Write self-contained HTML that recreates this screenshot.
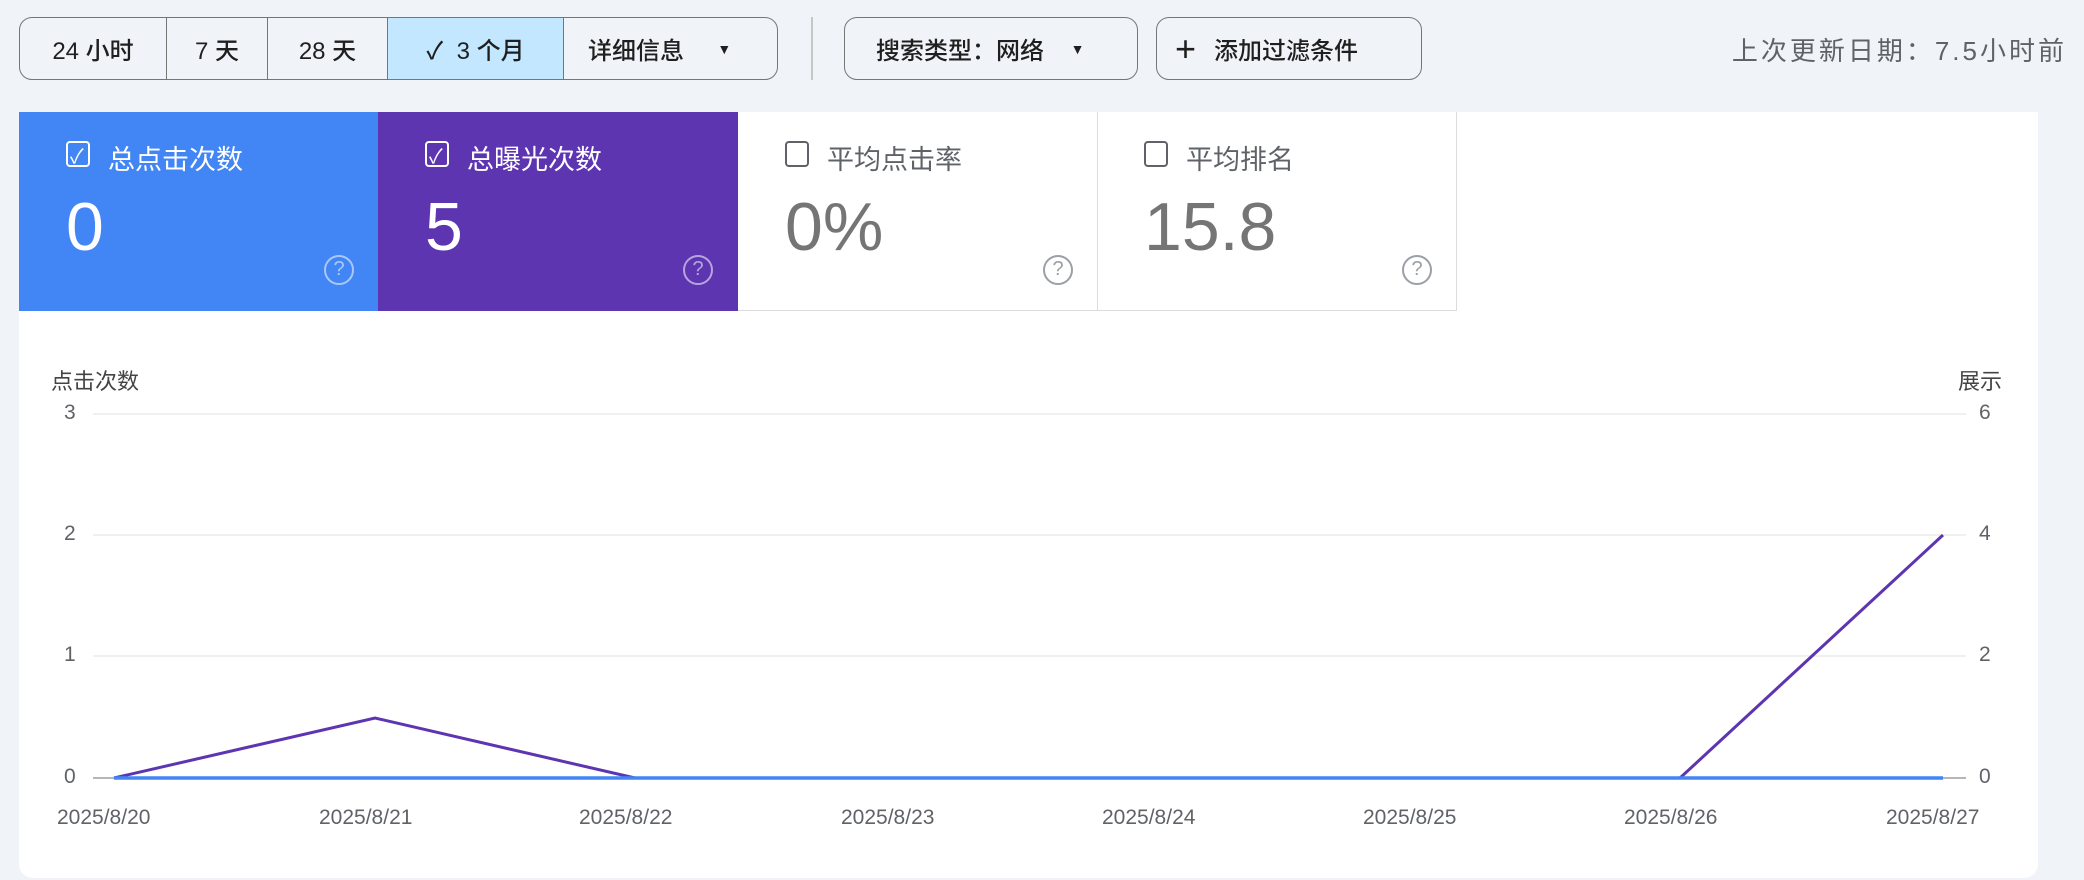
<!DOCTYPE html>
<html><head><meta charset="utf-8"><style>
*{margin:0;padding:0;box-sizing:border-box}
body{width:2084px;height:880px;background:#f0f4f9;font-family:"Liberation Sans","Noto Sans CJK SC",sans-serif;position:relative;overflow:hidden;color:#1f1f1f}
.abs{position:absolute}
.grp{left:19px;top:17px;width:759px;height:63px;border:1.5px solid #747775;border-radius:13px;overflow:hidden;display:flex}
.seg{height:100%;display:flex;align-items:center;justify-content:center;font-size:24px;border-right:1.5px solid #747775;color:#1f1f1f;font-weight:500}
.btn{top:17px;height:63px;border:1.5px solid #747775;border-radius:13px;display:flex;align-items:center;font-size:24px;font-weight:500}
.tile{top:112px;height:199px;width:360px}
.cb{position:absolute;left:47px;top:29px;width:24px;height:26px;border:2.5px solid #fff;border-radius:4px}
.lbl{position:absolute;left:89px;top:26px;font-size:27px}
.num{position:absolute;left:47px;top:76px;font-size:68px}
.q{position:absolute;left:305px;top:143px;width:30px;height:30px;border:2.5px solid rgba(255,255,255,.55);border-radius:50%;font-size:20px;text-align:center;line-height:25px;color:rgba(255,255,255,.55)}
.ax{font-size:21px;color:#5f6368}
</style></head><body>
<div class="abs grp">
 <div class="seg" style="width:147px">24 小时</div>
 <div class="seg" style="width:101px">7 天</div>
 <div class="seg" style="width:120px">28 天</div>
 <div class="seg" style="width:176px;background:#c2e7ff">✓&nbsp;&nbsp;3 个月</div>
 <div class="seg" style="flex:1;border-right:none;justify-content:flex-start;padding-left:24px">详细信息&nbsp;&nbsp;&nbsp;&nbsp;&nbsp;<span style="font-size:14px">▼</span></div>
</div>
<div class="abs" style="left:811px;top:17px;width:1.5px;height:63px;background:#c4c7c5"></div>
<div class="abs btn" style="left:844px;width:294px;padding-left:31px">搜索类型：网络&nbsp;&nbsp;&nbsp;&nbsp;<span style="font-size:14px">▼</span></div>
<div class="abs btn" style="left:1156px;width:266px;padding-left:18px"><span style="font-size:36px;font-weight:300;margin-right:18px">+</span>添加过滤条件</div>
<div class="abs" style="right:17px;top:31px;font-size:26px;letter-spacing:3px;color:#5f6368">上次更新日期：7.5小时前</div>

<div class="abs" style="left:19px;top:112px;width:2019px;height:766px;background:#fff;border-radius:0 0 14px 14px"></div>

<div class="abs tile" style="left:19px;background:#4285f4;color:#fff">
 <div class="cb"><span style="position:absolute;left:2px;top:-3px;font-size:20px">✓</span></div>
 <div class="lbl">总点击次数</div><div class="num">0</div><div class="q">?</div></div>
<div class="abs tile" style="left:378px;background:#5e35b1;color:#fff">
 <div class="cb"><span style="position:absolute;left:2px;top:-3px;font-size:20px">✓</span></div>
 <div class="lbl">总曝光次数</div><div class="num">5</div><div class="q">?</div></div>
<div class="abs tile" style="left:738px;border-right:1.5px solid #dadce0;border-bottom:1.5px solid #dadce0;color:#5f6368">
 <div class="cb" style="border-color:#5f6368"></div>
 <div class="lbl">平均点击率</div><div class="num" style="color:#757575">0%</div><div class="q" style="border-color:#9aa0a6;color:#9aa0a6">?</div></div>
<div class="abs tile" style="left:1097px;width:360px;border-right:1.5px solid #dadce0;border-bottom:1.5px solid #dadce0;color:#5f6368">
 <div class="cb" style="border-color:#5f6368"></div>
 <div class="lbl">平均排名</div><div class="num" style="color:#757575">15.8</div><div class="q" style="border-color:#9aa0a6;color:#9aa0a6">?</div></div>

<svg class="abs" style="left:0;top:0" width="2084" height="880">
 <g stroke="#ebebeb" stroke-width="1.5">
  <line x1="93" y1="414" x2="1966" y2="414"/><line x1="93" y1="535" x2="1966" y2="535"/><line x1="93" y1="656" x2="1966" y2="656"/>
 </g>
 <line x1="93" y1="778" x2="1966" y2="778" stroke="#9e9e9e" stroke-width="1.5"/>
 <polyline points="114,778 375,718 635,778 1680,778 1943,535" fill="none" stroke="#5e35b1" stroke-width="3"/>
 <line x1="114" y1="778" x2="1943" y2="778" stroke="#4285f4" stroke-width="3.5"/>
</svg>
<div class="abs ax" style="left:51px;top:364px;color:#444;font-size:22px">点击次数</div>
<div class="abs ax" style="left:1958px;top:364px;color:#444;font-size:22px">展示</div>
<div class="abs ax" style="left:64px;top:401px">3</div>
<div class="abs ax" style="left:64px;top:522px">2</div>
<div class="abs ax" style="left:64px;top:643px">1</div>
<div class="abs ax" style="left:64px;top:765px">0</div>
<div class="abs ax" style="left:1979px;top:401px">6</div>
<div class="abs ax" style="left:1979px;top:522px">4</div>
<div class="abs ax" style="left:1979px;top:643px">2</div>
<div class="abs ax" style="left:1979px;top:765px">0</div>
<div class="abs ax" style="left:57px;top:806px">2025/8/20</div>
<div class="abs ax" style="left:319px;top:806px">2025/8/21</div>
<div class="abs ax" style="left:579px;top:806px">2025/8/22</div>
<div class="abs ax" style="left:841px;top:806px">2025/8/23</div>
<div class="abs ax" style="left:1102px;top:806px">2025/8/24</div>
<div class="abs ax" style="left:1363px;top:806px">2025/8/25</div>
<div class="abs ax" style="left:1624px;top:806px">2025/8/26</div>
<div class="abs ax" style="left:1886px;top:806px">2025/8/27</div>
</body></html>
